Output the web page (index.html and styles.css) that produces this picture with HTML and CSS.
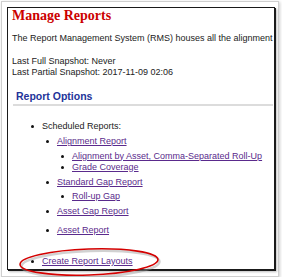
FILE: index.html
```html
<!DOCTYPE html>
<html lang="en">
<head>
    <meta charset="UTF-8">
    <title>Manage Reports</title>
    <link rel="stylesheet" href="styles.css">
</head>
<body>

<div class="frame">
    <div class="page">
        <h1 class="title">Manage Reports</h1>
        <p class="intro">The Report Management System (RMS) houses all the alignment</p>
        <p class="snap">Last Full Snapshot: Never<br>Last Partial Snapshot: 2017-11-09 02:06</p>

        <h2 class="section">Report Options</h2>
        <ul class="options">
            <li>Scheduled Reports:
                <ul>
                    <li><a href="#">Alignment Report</a>
                        <ul>
                            <li><a href="#">Alignment by Asset, Comma-Separated Roll-Up</a></li>
                            <li><a href="#">Grade Coverage</a></li>
                        </ul>
                    </li>
                    <li><a href="#">Standard Gap Report</a>
                        <ul>
                            <li><a href="#">Roll-up Gap</a></li>
                        </ul>
                    </li>
                    <li><a href="#">Asset Gap Report</a></li>
                    <li class="spaced"><a href="#">Asset Report</a></li>
                </ul>
            </li>
            <li class="layouts"><a href="#">Create Report Layouts</a></li>
        </ul>
    </div>

    <svg class="circle" width="160" height="40" viewBox="0 0 160 40">
        <ellipse cx="72" cy="17" rx="69" ry="13" fill="none" stroke="#999" stroke-opacity="0.45" stroke-width="2.5" transform="translate(1.5 2) rotate(-2 72 17)"/>
        <ellipse cx="72" cy="17" rx="69" ry="13" fill="none" stroke="#d40000" stroke-width="1.6" transform="rotate(-2 72 17)"/>
    </svg>
</div>

</body>
</html>
```

FILE: styles.css
```css
body {
    margin: 0;
    background: #fff;
    font-family: "Liberation Sans", Arial, sans-serif;
    color: #222;
}

.frame {
    position: relative;
    box-sizing: border-box;
    width: 278px;
    height: 276px;
    margin: 1px 0 0 1px;
    padding: 5px 2px 5px 5px;
    border: 1px solid #cfcfcf;
    box-shadow: 1px 1px 3px rgba(0, 0, 0, 0.2);
}

.page {
    box-sizing: border-box;
    width: 268px;
    height: 263px;
    padding: 0 0 0 4px;
    overflow: hidden;
    border: 1px solid #1a1a1a;
    box-shadow: 1px 1px 0 #1a1a1a, 2px 2px 2px rgba(0, 0, 0, 0.25);
    white-space: nowrap;
    font-size: 9px;
    line-height: 11px;
}

.title {
    margin: 0;
    font-family: "Liberation Serif", "Times New Roman", serif;
    font-size: 14px;
    line-height: 16px;
    color: #cc0000;
}

.intro {
    margin: 9px 0 0;
}

.snap {
    margin: 12px 0 0;
    line-height: 10.6px;
}

.section {
    margin: 13px 1px 0 1px;
    padding: 0 0 1px 3px;
    border-bottom: 2px solid #dcdcdc;
    font-size: 10.5px;
    line-height: 13px;
    color: #223399;
}

.options {
    margin: 15px 0 0;
    padding-left: 30px;
    list-style: none;
}

.options ul {
    margin: 3.5px 0 0;
    padding-left: 15px;
    list-style: none;
}

.options ul li {
    margin-top: 4px;
}

.options ul ul li {
    margin-top: 0;
}

.options li::before {
    content: "";
    display: inline-block;
    width: 3px;
    height: 3px;
    margin: 0 8.5px 0 -11.5px;
    border-radius: 50%;
    background: #111;
    vertical-align: middle;
}

.options ul li.spaced {
    margin-top: 8px;
}

.options li.layouts {
    margin-top: 20px;
}

.options a {
    color: #5a2a8c;
    text-decoration: underline;
}

.circle {
    position: absolute;
    left: 15px;
    top: 243px;
}
```
